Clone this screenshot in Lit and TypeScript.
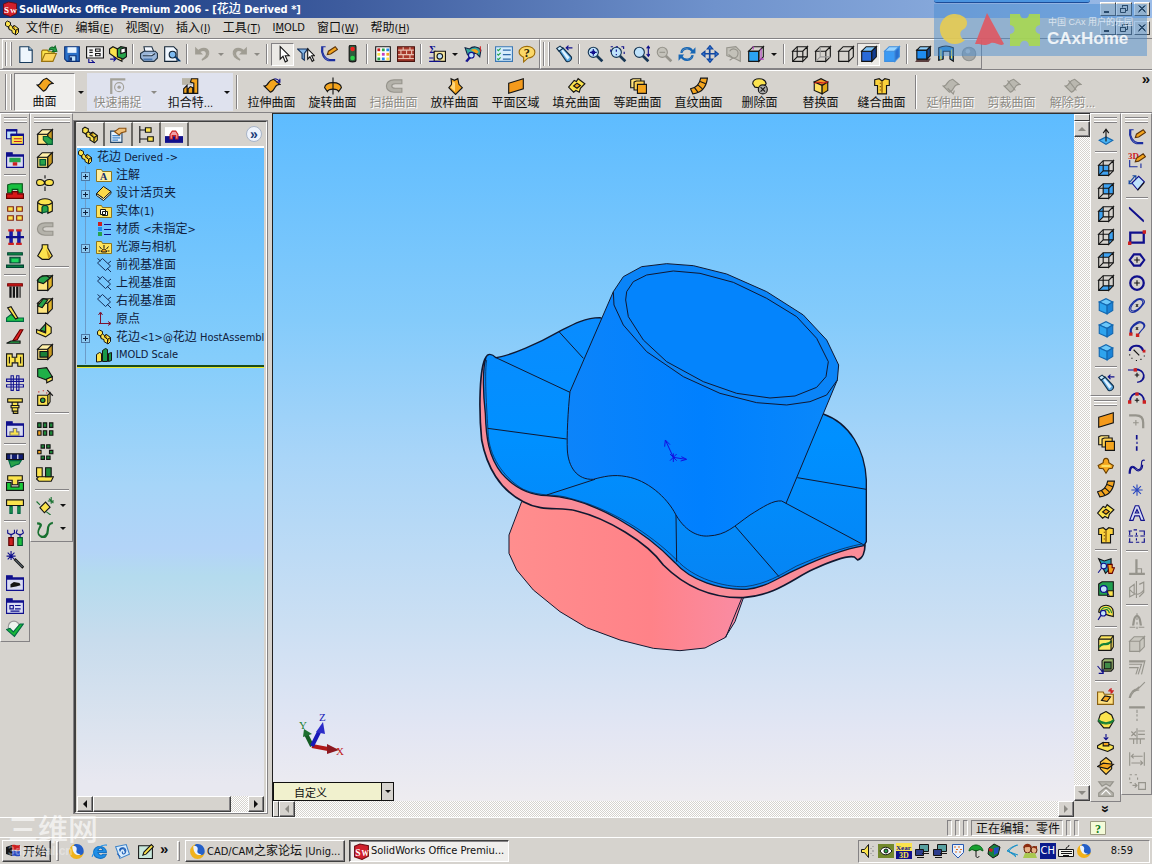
import { LitElement, html, svg, css, nothing } from "lit";
import { customElement, property } from "lit/decorators.js";
import { classMap } from "lit/directives/class-map.js";

type Shape = [string, string, string] | ["T", string, number, number, number, string];

const K = "#151515";
const N = "#10108c";
const Y = "#fbe34d";
const O = "#f4a51e";
const G = "#27a34a";
const B = "#1f8cf0";
const L = "#bfe2fb";
const D = "#96948c";
const R = "#cc2020";
const W = "#ffffff";
const X = "none";

/* wire box: front, top, side and hidden edges */
const FRONT = "M1.5 5.5h9v9h-9z";
const TOP = "M1.5 5.5l4-4h9l-4 4z";
const SIDE = "M10.5 5.5l4-4v9l-4 4z";
const HIDDEN = "M5.5 1.5v9h9M5.5 10.5l-4 4";
const wire = (face: string): Shape[] => [
  ["#3da2f2", X, face],
  [X, K, FRONT + TOP + SIDE],
  [X, K, HIDDEN],
];
const solid = (f: string, t: string, s: string, line = K): Shape[] => [
  [f, line, FRONT],
  [t, line, TOP],
  [s, line, SIDE],
];
const iso = (t: string, l: string, r: string, line = K): Shape[] => [
  [t, line, "M2 4.5L8 1.5l6 3-5 3z"],
  [l, line, "M2 4.5l7 3v7.5l-7-3z"],
  [r, line, "M14 4.5l-5 3v7.5l5-3z"],
];
const sheet = (c: string, line: string): Shape[] => [
  [c, line, "M1 8c2 0 3-1 4-3s2.500-2.500 4.500-3l5.500 4.500c-2 0-3.500 1-4.500 3s-2 3.500-4 4z"],
];
const lens = (c: string, line: string): Shape[] => [
  [X, line, "M9.500 9.500l5 5M10 9l5 5M9 10l5 5"],
  [c, line, "M11 6.500a4.500 4.500 0 1 1-9 0a4.500 4.500 0 1 1 9 0z"],
];
const part: Shape[] = [
  [Y, K, "M1.500 2.500l2-1.500 3 1.500v2.500l2 1.500 2-1 4 3v4l-2.500 2.500-4-2.500v-2l-3-1v-2l-3.500-2z"],
  ["#b88a10", K, "M6.500 5l-2 1.500v2M14.500 8.500l-3 1.800v4.200M10.500 5.500l-2.500 2 3.500 2.800"],
];
const windowBox: Shape[] = [
  ["#d9dcf2", N, "M.5 3.500h15v11h-15z"],
  [N, N, "M.5 1.500h5v2h10v1h-15z"],
];
const globe: Shape[] = [
  ["#f0b21c", X, "M8 1a7 7 0 1 0 7 7c-1 3-5 4-7 1s-1-6 0-8z"],
  ["#245fc8", X, "M6 1.500c5-2 10 3 8.500 8-1.500 3-5 2.500-6.500 0s-4-5-2-8z"],
  ["#e8f2ff", X, "M4 3c3-1 5 1 4 4s3 4 4 3c-2 3-8 1-8-7z"],
];
const sw: Shape[] = [
  ["#d0202c", "#6d0d14", "M1.500 3l5-2 8 1.500v10l-6 3-7-2.500z"],
  ["T", W, 2, 12, 9, "S"],
  ["T", W, 8, 12, 7, "W"],
];
const monitors: Shape[] = [
  ["#58a0a0", K, "M5.500 1.500h9v7h-9z"],
  ["#2c3c8c", K, "M1.500 6.500h8v6h-8z"],
  [X, K, "M8 10.500h7M3 14.500h7"],
];
const plane: Shape[] = [[X, "#16305c", "M1.500 6l5-4.500 8 7.500-5 4.500zM1.500 1.500l3 2.500M11 11l4 4M12 6.500l3-2.500"]];

const ICONS: Record<string, Shape[]> = {
  part, globe, sw, monitors, plane,
  new: [["#eef6fd", "#163a5c", "M2.500 1.500h8l3 3v11h-11z"], [L, "#163a5c", "M10.500 1.500v3h3"]],
  open: [[Y, "#9a7410", "M1.500 14.500v-9l1-1h4l1 1.500h5v2"], ["#fdd55c", "#9a7410", "M1.500 14.500l3-7h10l-3 7z"], [G, "#0f6a28", "M8 4.500c1-3 3-3 4.500-2l1-1.500 1.500 4.500-4 .5 1-1.500c-1-1-2-.5-4 0z"]],
  save: [["#2a70c8", "#0b2f74", "M1.500 1.500h13v13h-11l-2-2z"], ["#e8f4ff", X, "M4 2h8v5h-8z"], [L, "#0b2f74", "M5.500 9.500h6v5h-6z"], ["#0b2f74", X, "M6 11h2v3h-2z"]],
  drawing: [["#f4f4f4", K, "M.5 1.500h15v10h-15z"], [X, K, "M3 4.500h3M3 6.500h3M3 9.500h3M8.500 3.500h4v2h-4zM8.500 7.500h4v2h-4z"], [X, N, "M5 15.500h3M2.500 12.500v3h4M5 13.500l2 2-2 2"]],
  asm: [[Y, K, "M.5 3.500l3-2 4 2v5l4 1v5l-4-2-7-5z"], [G, K, "M7.500 3.500l3-2 5 1v8l-3 2-5-2z"], [W, K, "M10.500 3.500l4-1v4l-4 1z"], [X, N, "M1 12.500h5M4 10.500l2 2-2 2"]],
  print: [["#f4f8ff", "#234", "M4.500 6.500l-1-5h7l2 5z"], ["#9bb6d8", "#234", "M.5 7.500l3-2h10l2 2v4l-3 3h-9l-3-3z"], ["#dfeaf6", "#234", "M2.500 9.500h8l3-2"], ["#4a78b0", X, "M3 12h8v1.500h-8z"]],
  preview: [["#f0f7ff", "#123", "M1.500 1.500h8l3 3v10h-11z"], ["#7dbaf0", "#123", "M11.500 8.500a3 3 0 1 1-6 0a3 3 0 1 1 6 0z"], [X, "#0b3c70", "M10.500 10.500l4 4M11 10l4.500 4.500"]],
  undo: [[X, "#a09d93", "M3 6c3-4 9-4 10 0s-2 6-6 7.500M3.500 6.500c3-4 8-3 8.500 0s-2 5-5 6.500M3.500 7.500c3-4 7-3 7.500-.5s-1 4-4 6"], ["#a09d93", X, "M1 1.500v7h7z"]],
  redo: [[X, "#a09d93", "M13 6c-3-4-9-4-10 0s2 6 6 7.500M12.500 6.500c-3-4-8-3-8.500 0s2 5 5 6.500M12.500 7.500c-3-4-7-3-7.500-.5s1 4 4 6"], ["#a09d93", X, "M15 1.500v7h-7z"]],
  arrow: [[W, K, "M5.500 1.500v11l2.500-2.500 2 5 2-1-2-4.500h3.500z"]],
  filter: [["#86b8e8", "#14305c", "M.5 3.500h9l-3 4v6l-2-1.500v-4.500z"], [W, K, "M9.500 3.500v9l2-2 2 4 1.500-1-2-4h2.500z"]],
  sketch: [[X, "#1b2ea0", "M5 1.500h-4M1.500 2c-1 6 2 11 6 12h6M2.500 2c-1 6 2 10 6 11h5"], [O, "#5d3408", "M6.500 8.500l1-3 6-4 2 2.500-6 4z"]],
  light: [["#2c5c3c", K, "M5.500 1.500c0-2 6-2 6 0v12c0 2-6 2-6 0z"], ["#f02020", X, "M10.500 3.500a2 2 0 1 1-4 0a2 2 0 1 1 4 0z"], ["#28d048", X, "M10.500 11.500a2 2 0 1 1-4 0a2 2 0 1 1 4 0z"]],
  palette: [[W, K, "M1.500 1.500h13v13h-13z"], [R, X, "M3 3h2.500v2.500h-2.500z"], [G, X, "M7 3h2.500v2.500h-2.500zM3 11h2.500v2.500h-2.500z"], [B, X, "M11 3h2.500v2.500h-2.500zM7 11h2.500v2.500h-2.500z"], [Y, X, "M3 7h2.500v2.500h-2.500zM11 11h2.500v2.500h-2.500z"], ["#c040c0", X, "M7 7h2.500v2.500h-2.500z"], [O, X, "M11 7h2.500v2.500h-2.500z"]],
  brick: [["#a93a2c", "#4a1510", "M.5 1.500h15v13h-15z"], [X, "#e8c0b0", "M1 4.500h14M1 8.500h14M1 12h14M5.500 2v2M11.500 2v2M3.500 5v3M8.500 5v3M13 5v3M5.500 9v3M11.500 9v3"]],
  measure: [["T", N, 1, 7, 9, "Σ"], ["#f5e6a0", K, "M5.500 5.500h10v9h-10z"], [L, K, "M13 10a2.500 2.500 0 1 1-5 0a2.500 2.500 0 1 1 5 0z"], [X, N, "M1 11.500h4M1 14.500h10"]],
  check: [["#35a8a0", "#124", "M1 2.500l4 1c3-3 8-2 10 1l-1 6-4-4-4 5-3-3z"], [O, X, "M6 4.500c3-2 6-1 7 2l-2 1-3-2z"], [L, N, "M9 9a2.500 2.500 0 1 1-5 0a2.500 2.500 0 1 1 5 0z"], [X, N, "M4.500 11l-3 3.500M5.500 11.500l-3 3.500"], [X, R, "M14.500 1v5"]],
  list: [["#d6ecfc", "#3b78b4", "M.5 1.500h15v13h-15z"], [X, "#2f6aa8", "M7 4.500h7M7 8.500h7M7 12.500h7"], [X, G, "M2 4l1 1 2-2M2 8l1 1 2-2M2 12l1 1 2-2"]],
  help: [["#fbd868", "#9c6c08", "M15 6.500c0 4-4 5-6 5l-4 3.500v-4c-2-1-4-2-4-4.500 0-7 14-7 14 0z"], ["T", "#2a2408", 5, 11, 11, "?"]],
  torch: [["#5aa8e0", "#10304c", "M3.500 5l3.500-2.500 7 7.500c2 2-1 6-4 4.500z"], ["#c8ecff", "#10304c", "M1.500 3l3-2 2.500 2-3.500 2.500z"], ["#dff2ff", X, "M5.500 5l1.500-1 6 7-2 2z"], [X, N, "M9.500 2.500h6M12 .5l-2 2 2 2"]],
  zoomfit: [...lens(L, "#173654"), [X, N, "M6.500 3.500v6M3.500 6.500h6M5.500 5.500h2v2h-2z"]],
  zoomarea: [...lens(L, "#173654"), [X, N, "M6.500 4v2M6.500 8v1M1.500 1.500h2M6 1.500h2M11 1.500h2v2M1.500 4v2M13.500 6v2"]],
  zoomio: [...lens(L, "#173654"), [X, N, "M14.500 1.500v8M13 3l1.500-2L16 3M13 8l1.500 2L16 8"]],
  zoomsel: [...lens("#c4c2ba", D), [X, D, "M4 6.500h5"]],
  rotate: [[X, "#1766b4", "M2.500 7c1-6 9-6 11-1M13.500 9c-1 6-9 6-11 1M3.500 7c1-4 7-5 9-1M12.500 9c-1 4-7 5-9 1"], ["#1766b4", X, "M15.500 2v5.500h-5zM.5 14v-5.500h5z"]],
  pan: [[X, "#1247a0", "M8 2v12M2 8h12M7.500 3v10M3 7.500h10"], ["#2f78d8", "#1247a0", "M8 .5l2.500 3h-5zM8 15.500l2.500-3h-5zM.5 8l3-2.500v5zM15.500 8l-3-2.500v5z"]],
  rotgray: [["#c3c1b9", D, "M2.500 2.500l8-1 4 4v9l-4-2-8-3z"], [X, D, "M5 5.500a4 4 0 1 1 3 6M4 8.500l4 3-3 2"]],
  stdview: [["#2aa4f4", K, "M1.500 5.500h9v9h-9z"], [X, K, TOP + SIDE], [X, "#b040c0", "M5.500 4v-3M12.500 3v9M11 12.500h4"]],
  wire: [[X, K, FRONT + TOP + SIDE], [X, K, HIDDEN]],
  hidvis: [[X, K, FRONT + TOP + SIDE], [X, "#999", HIDDEN]],
  hidrem: [[X, K, FRONT + TOP + SIDE]],
  shadedge: solid("#2a6ad8", "#7fc4f8", "#123c90"),
  shaded: solid("#3b9af4", "#9bd4ff", "#2a70d0", "#3f8fe0"),
  shadow: [["#5c4040", X, "M1 15l2-3h12l-2 3z"], [B, K, "M2.500 4.500h9v8h-9z"], ["#8fd0ff", K, "M2.500 4.500l3-3h9l-3 3z"], ["#154a90", K, "M11.500 4.500l3-3v8l-3 3z"]],
  section: [["#2f90d8", K, "M1.500 2.500c4-2 9-2 13 0v12l-3-2v-7h-6v7l-4 1z"], [X, Y, "M3.500 4v9M13 4v8"]],
  sphere: [["#a5a7a6", "#909290", "M14 8a6 6 0 1 1-12 0a6 6 0 1 1 12 0z"], ["#c8caca", X, "M9 5.500a2 2 0 1 1-4 0a2 2 0 1 1 4 0z"]],
  surf: sheet(O, K),
  surfGray: [...sheet("#bab8b0", D), [X, D, "M5 10l5 5 1-3"]],
  trimGray: [...sheet("#bab8b0", D), [X, D, "M4 3l7 9"]],
  snap: [[X, "#a3a199", "M1.500 15v-13.500h13M2.500 15v-12.500h12M13 9a4 4 0 1 1-8 0a4 4 0 1 1 8 0z"], ["#a3a199", X, "M10.500 9a1.500 1.500 0 1 1-3 0a1.500 1.500 0 1 1 3 0z"]],
  snapfit: [["#b9b5a8", X, "M0 1h9v6h-9z"], [O, K, "M1.500 14.500v-4l3-3v7zM5.500 14.500v-4l2-2 2 1v5zM10.500 14.500v-9l-3-1 1-3h5.500v13z"]],
  extrude: [...sheet(O, K), [X, N, "M10 1.500c3 0 4 1 5 3M15 1.500v3h-3"]],
  revolve: [[O, K, "M.5 9.500c1-6 14-6 15 0l-2.500 3.500c-1-3-9-3-10 0z"], [X, K, "M8 .5v15"]],
  sweepGray: [["#b4b2aa", D, "M15 2.500h-7c-9 0-9 11 0 11h7v-3.500h-6c-4 0-4-4 0-4h6z"]],
  loft: [[O, K, "M4.500 1.500l3 1.500 3-1.500 1 5 3 3-6 6-6-6 2.500-3z"], ["#ffd77a", X, "M6 4l2 1v8l-4-4 1-1z"]],
  planar: [["#f39a1c", K, "M1.500 5.500l13-4v9l-13 4z"]],
  fill: [[Y, K, "M.5 9l5-6 2 1 1.500-2.500 6 4.500-4 4-1 3.500-3-1.500-2 1.500z"], [O, K, "M5 8l3-2.500 3 2-3 2.500z"]],
  offset: [["#ffe27a", K, "M1.500 2.500l2-1h7v8h-9z"], ["#ffd050", K, "M4.500 4.500l2-1h7v8h-9z"], [O, K, "M7.500 6.500h8v8h-8z"]],
  ruled: [[O, K, "M.5 10.500c5-1 8-4 9-9.500h6c-1 8-5 13-13 14z"], [X, K, "M4 9.500l3 4M7 7l4 3.500M9 4l5 2"]],
  delface: [[Y, K, "M1.500 6c0-6 11-6 12 0l-4 4-6-1z"], ["#aaa", K, "M14.500 11a4 4 0 1 1-8 0a4 4 0 1 1 8 0z"], [X, K, "M8.500 9l4 4M12.500 9l-4 4"]],
  replace: [...iso("#f59a28", "#ffe060", "#e0a818"), [X, R, "M2 6c3-4 8 2 12-2"]],
  knit: [["#fbd23c", K, "M1.500 2.500l4-1 2.500 2 2.500-2 4 1v5h-2.500v7.500h-8v-7.500h-2.500z"], [X, "#7a4a00", "M8 4v10M6 5.500h1M6 8.500h1M6 11.500h1"]],
  /* mould toolbar */
  wins: [[L, N, "M.5 1.500h9v8h-9z"], [Y, N, "M4.500 5.500h11v9h-11z"], [N, N, "M.5 1.500h9v1h-9zM4.500 5.500h11v1h-11z"], [X, R, "M7 9.500h7M7 12h7"]],
  winmold: [...windowBox, [G, X, "M3 6h10v4h-10z"], [R, X, "M6 10h4v3h-4z"]],
  core: [["#18c040", "#065018", "M1.500 9.500v-7l3-1h10v8h-4v-3h-5v3z"], ["#d81818", "#600", "M.5 10.500h5v-2h5v2h5v4h-15z"]],
  blocks: [[Y, "#802010", "M1.500 1.500h5v4h-5zM9.500 1.500h5v4h-5zM1.500 9.500h5v4h-5zM9.500 9.500h5v4h-5z"]],
  pins: [["#2020c0", N, "M3.500 2.500h2v11h-2zM10.500 2.500h2v11h-2zM.5 7.500h15v1h-15z"], [R, X, "M2 1h5v2h-5zM9 1h5v2h-5zM2 13h5v2h-5zM9 13h5v2h-5z"]],
  base: [["#109048", "#043", "M1.500 1.500h13v2h-13zM3.500 5.500h9v5h-9zM.5 12.500h15v2h-15z"], ["#20d860", X, "M5 7h6v3h-6z"]],
  ejector: [["#d81818", "#700", "M1.500 1.500h13v2h-13z"], [X, K, "M3.500 4v10M6.500 4v10M9.500 4v10M12.500 4v10M4.500 4v10M7.500 4v10M10.500 4v10"]],
  lifter: [["#20c848", "#064", "M.5 11.500l4-3 4 3h7v3h-15z"], [Y, K, "M1.500 2.500l3-1 6 10-2 1z"]],
  slide: [["#e02020", "#600", "M12.500 1.500h2.500l-5 9-4 1z"], [G, K, "M.5 13.500l4-2h8v2z"]],
  insert: [[Y, K, "M.5 2.500h5v3h4v-3h6v11h-5v-3h-5v3h-5z"], [X, K, "M3 5v6M13 5v6M8 6v4"]],
  cool: [[W, N, "M4.500 1.500h2v13h-2zM9.500 1.500h2v13h-2zM.5 4.500h15v2h-15zM.5 9.500h15v2h-15z"]],
  screw: [[Y, K, "M1.500 1.500h13v3h-13zM5.500 4.500h5v3h-5zM4.500 7.500h7v2h-7zM5.500 9.500h5v3h-5zM6.500 12.500h4v2h-4z"]],
  winlib: [...windowBox, [Y, "#777", "M3.500 10.500h3v-3h3v3h2v3h-8z"]],
  electrode: [["#101c70", K, "M.5 2.500h15v5h-15z"], [G, "#064", "M2.500 8.500h11l-2 3-3 1-4 2z"], [X, W, "M4.500 3v4M10.500 3v4"]],
  yin: [["#18c838", K, "M.5 7.500h4v4h7v-4h4v7h-15z"], [Y, K, "M1.500 1.500h13v4h-4v4h-5v-4h-4z"]],
  bench: [[Y, K, "M.5 2.500h15v5h-15z"], [G, "#064", "M3.500 8.500h2v6h-2zM10.500 8.500h2v6h-2z"]],
  tools: [[R, "#500", "M2.500 8.500h4v7h-4z"], ["#20c040", "#053", "M10.500 8.500h4v7h-4z"], [X, N, "M4.500 8v-3M1.500 1.500v3l3 1.500 3-1.500v-3M12.500 8v-3M10 1.500l-1 3 3.500 2 3-2-1-3"]],
  wand: [[X, N, "M4.500 0v8M.5 4.500h8M1.500 1.500l6 6M7.500 1.500l-6 6"], [L, K, "M7.500 8l1-1 7 7-1 1z"]],
  winpic: [...windowBox, [K, X, "M4 9l3-2 5 1 1 2-4 1-5 1z"]],
  wintab: [...windowBox, [X, N, "M3.500 7.500h3v3h-3zM8 7.500h5M8 10.500h5M4 12.500h8"]],
  ok: [["#eef4ee", "#999", "M12 6a5 5 0 1 1-10 0a5 5 0 1 1 10 0z"], ["#18b838", "#064", "M.5 8.500l3-1 3 3 6-7 3 0-8 11z"]],
  /* feature toolbar */
  boss: [...solid("#ffe680", "#fff0a8", "#c89a20"), [G, "#053", "M6.500 7.500h4l4 3v4h-4l-4-4z"]],
  cut: [...solid("#ffe680", "#fff0a8", "#c89a20"), [G, "#053", "M3.500 7.500h5v5h-5z"]],
  revboss: [[Y, K, "M.5 7.500c0-4 6-3 7 0 1-3 8-4 8 0s-7 3-8 1c-1 2-7 3-7-1z"], [X, K, "M8 1v3M8 6v3M8 11v4"]],
  revcut: [[Y, K, "M1.500 4.500c2-4 11-4 13 0v8l-4 2v-5c0-2-5-2-5 0v5l-4-2z"], [G, "#053", "M5.500 14v-5c1-2 4-2 5 0v4z"], [X, K, "M1.500 5c3 3 10 3 13 0"]],
  loftboss: [[Y, K, "M5.500 1.500h5v3l4 7-3 3h-6l-4-3 4-7z"], ["#c89a20", X, "M9 5l4 7-2 2z"]],
  fillet: [...solid("#ffe680", "#4fc35c", "#e0b428"), [G, K, "M1.500 7c0-4 3-5 8-5.500l3 2-6 5z"]],
  chamfer: [...solid("#ffe680", "#ffe680", "#e0b428"), [G, K, "M1.500 8l5-6.500 4 1-5 7z"]],
  rib: [[Y, K, "M.5 8.500l8 3v-9l5 4v5l-5 3.500-8-3.500z"], [G, K, "M3.500 9l5-5.500v7z"]],
  shell: [...solid("#ffe680", "#fff0a8", "#c89a20"), ["#188038", K, "M3.500 7.500h7v5h-7z"]],
  draft: [["#20b048", K, "M1.500 2.500l8-1 5 8-5 3-8-3z"], [Y, K, "M9.500 11.500l5-2v3l-5 2.500z"]],
  holewiz: [[Y, K, "M1.500 5.500h9v9h-9zM10.500 5.500l2-2v8l-2 3"], [G, K, "M8 10a2 2 0 1 1-4 0a2 2 0 1 1 4 0z"], [X, R, "M2 2.500h1M6 1.500h1M9 3.500h1"], [X, K, "M10 1l5 5"]],
  pattern: [["#1c8838", K, "M6.500 2.500h3v4h-3zM12 2.500h3v4h-3zM1.500 2.500h3v4h-3zM6.500 9.500h3v4h-3zM12 9.500h3v4h-3z"], [O, K, "M1.500 9.500h3v4h-3z"]],
  circpat: [["#1c8838", K, "M4.500 1.500h3v3h-3zM9.500 1.500h3v3h-3zM12 6.500h3v3h-3zM9.500 11.500h3v3h-3zM4.500 11.500h3v3h-3z"], [O, K, "M1.500 6.500h3v3h-3z"]],
  mirror: [[Y, K, "M.5 1.500h5v8h-5zM.5 11.500l2-2h13l-2 4h-11z"], ["#1c8838", K, "M8.500 1.500h5v8h-5z"]],
  refgeo: [[Y, K, "M3.500 9.500l5-5 4 4.500-5 5z"], [X, "#187030", "M.5 4l3 3M9 13l4 3M13.500 0v6M10.500 3.500h6M11.500 1.500l4 4"]],
  curve: [[X, "#187030", "M1 2.500c3 0 5 1 3 4s-3 6 0 7.500 6-1 6-5 1-6 5-7M1 3.500c3 0 3 1 2 3s-3 6 1 8.500 7-1 7-6 2-6 4-6M1 3c4 0 4 1 2.500 3.500s-3 6 .5 8 6.500-1 6.500-5.500 1.500-6 4.500-6.500"]],
  /* view toolbar */
  normalto: [["#4ab4f4", "#1468b0", "M2 11l6-3 6 3-6 3.500z"], [X, K, "M8 12v-11M5.500 4.500l2.500-3.500 2.500 3.500"]],
  vfront: wire(FRONT),
  vback: wire("M5.500 1.500h9v9h-9z"),
  vleft: wire("M1.500 5.500l4-4v9l-4 4z"),
  vright: wire(SIDE),
  vtop: wire(TOP),
  vbottom: wire("M1.500 14.500l4-4h9l-4 4z"),
  viso: iso("#6cc8fa", "#2ea4ee", "#1b84d8", "#1468b0"),
  /* surface column */
  revsurf: [[O, "#6a4000", "M5.500 5c0-5 5-5 5 0l4 2.500-1 2.500-3 .5-2.500 4-2.500-4-3.500-.5-1-2.500z"], ["#ffe060", X, "M4 7h8v2h-8z"]],
  thick: [["#289cb0", K, "M1.500 1.500l5 2 6-2v8l-5 5z"], [O, "#600", "M9.500 6.500h4v3h2l-2 5h-3z"], [L, N, "M8.500 8a2.500 2.500 0 1 1-5 0a2.500 2.500 0 1 1 5 0z"], [X, N, "M4 10l-3 4"]],
  inspect: [["#20a050", K, "M1.500 3.500l3-2h10v9l-3 3h-10z"], [Y, K, "M9.500 9.500h5v5h-5z"], [L, N, "M9 8a3 3 0 1 1-6 0a3 3 0 1 1 6 0z"], [X, N, "M8 10l3 4"]],
  zebra: [[Y, K, "M1.500 8c0-8 13-8 13 0v4l-4-1z"], [X, "#178038", "M3 8c2-6 9-5 10 1M5 8c2-3 5-3 6 1"], [L, N, "M8 9a2.500 2.500 0 1 1-5 0a2.500 2.500 0 1 1 5 0z"], [X, N, "M3.500 11l-2.500 4"]],
  split: [["#ffe860", K, "M1.500 4.500l2-3h11v10l-2 3h-11z"], [X, "#178038", "M2 11c4-6 5 1 11-5M2 12c4-6 5 1 11-5"], [X, K, "M1.500 4.500h11v10M12.500 4.500l2-3"]],
  move: [["#9cb870", K, "M4.500 3.500l2-2h8v9l-2 2h-8z"], ["#408c48", K, "M6.500 4.500h6v6h-6z"], [X, N, "M.5 8l5 6M5.500 10.500v4h-4"]],
  libfeat: [["#ffe080", "#8a6010", "M.5 14.500v-11h5l1 2h8v9z"], [O, K, "M4 11l3-4 5 1-3 4z"], [X, R, "M12.500 0v5M10 2.500h5M11 1l3 3"]],
  parting: [[Y, K, "M8 .5l5 3 2 5-4 6.500h-5l-5-6 2-6z"], [X, "#178038", "M1 8.500c4 4 10 4 14 0M1 7.500c4 4 10 4 14 0"]],
  toolsplit: [[Y, K, "M.5 10.500l5-3 9 3v2.500l-5 2.500-9-3z"], [O, K, "M5.500 7.500h5v3h-5z"], [X, N, "M8 0v5M6 3l2 2 2-2"]],
  shutoff: [["#ffc840", K, "M8 .5l5 4v6l-5 5-5-5v-6z"], [O, K, "M.5 8.500l5-3 9 1-5 4z"]],
  corecav: [["#b5b3ab", D, "M1.500 1.500h13l-3 4-3.500-2-3.500 2zM1.500 14.500h13v-3l-6.500-5-6.500 5z"], [X, W, "M4 13l4-4 4 4"]],
  /* sketch column */
  sk3d: [["T", R, 0, 7, 8, "3D"], [X, "#1b2ea0", "M1.500 8v6h7M11.500 15v-4"], [O, "#5d3408", "M6.500 9.500l1-3 6-4 2 2.500-6 4z"]],
  dim: [[L, N, "M3.500 8l6-6 5 5-6 7z"], [X, "#1a4aa0", "M.5 8.500l6-7M1 5.500v3h3M4 1.500h3v3"], [X, K, "M8.500 14.500l6-7"]],
  line: [[X, N, "M1 2l13 12M1 3l13 12"]],
  rect: [[X, N, "M1.500 3.500h13v10h-13zM2.500 4.500h11v8h-11z"], [R, X, "M0 12h3v3h-3zM13 2h3v3h-3z"]],
  poly: [[X, N, "M5 2.500h6l4 5.500-4 5.500h-6l-4-5.500zM5.500 3.500h5l3.500 4.500-3.500 4.500h-5l-3.500-4.500z"], [X, K, "M8 5.500v5M5.500 8h5"]],
  circle: [[X, N, "M14.500 8a6.500 6.500 0 1 1-13 0a6.500 6.500 0 1 1 13 0zM13.500 8a5.500 5.500 0 1 1-11 0a5.500 5.500 0 1 1 11 0z"], [X, K, "M8 5.500v5M5.500 8h5"]],
  ellipse: [[X, "#1b2ea0", "M2 13c-3-3 2-9 6-11s8 1 6 4-8 10-12 7zM3 12c-2-3 2-7 5-9s6 0 5 3-7 8-10 6z"], [X, K, "M7 6.500l2 2M9 6.500l-2 2"]],
  pellipse: [[X, "#1b2ea0", "M3 13c-3-4 1-9 5-11s9 2 6 5-4 5-5 6M3.500 12c-2-4 1-7 5-9s7 2 5 4"], [X, K, "M7 6.500l2 2M9 6.500l-2 2"], [R, X, "M1 11h3v3h-3zM7 12h3v3h-3z"]],
  carc: [[X, N, "M1 7c1-6 11-7 13 0M2 7c1-5 9-6 11 0"], [X, K, "M5 6l5 5M1.500 10v1M3 13.500h1M7 15.500h1M11 14.500h1M14 11.500h1"], [R, X, "M13 6h2.500v2.500h-2.500z"]],
  tarc: [[X, N, "M0 3.500h6c10-1 10 10 2 11M6 2.500c10 0 11 11 3 12"], [R, X, "M5 2h3v3h-3z"], [X, K, "M8 6v4M6 8h4"]],
  arc3: [[X, N, "M2 11c0-9 12-9 12 0M1.500 11c0-10 13-10 13 0"], [R, X, "M0 10h3v3h-3zM13 10h3v3h-3zM6.500 3h3v3h-3z"], [X, K, "M8 8v4M6 10h4"]],
  skfillet: [[X, D, "M1 2.500h6c5 0 7 3 7 7v5M1 3.500h6c4 0 6 2 6 6v5M7 7v5M4.500 9.500h5"]],
  center: [[X, N, "M8 0v4M8 6v2M8 10v4M7.500 0v4M7.500 10v4"]],
  spline: [[X, N, "M1 14c0-7 3-8 6-5s5 0 5-4 2-3 3-3M2 14c0-6 2-7 4.500-4s6.500 1 6.500-4"]],
  point: [[X, "#2a48c0", "M8 3v10M3 8h10M4.500 4.500l7 7M11.500 4.500l-7 7"]],
  text: [["#d5d9f2", N, "M6.500 1.500h3l5 13h-3l-1.500-4h-4l-1.500 4h-3zM8 5l-1.500 3h3z"]],
  skgrid: [[X, N, "M.5 3.500h3M5 2.500h3M10 3.500h5M.5 8h4M6 8h3M11 8h4M.5 13.500h4M7 13.500h3M12 13.500h3M1.500 4v3M1.500 10v3M14.500 4v3M14.500 10v3M7.500 5v2M7.500 10v2"]],
  perp: [[X, D, "M8 1v13M7 1v13M1 14.500h14M1 13.500h14M8 9.500h4v4"]],
  symm: [[X, D, "M7.500 0v15M1.500 6l4-3v9l-4 2zM10 3l4-2v9l-4 4M2 8c4 5 8 5 12 0"]],
  bell: [[X, D, "M8 1v2M8 5v2M8 9v2M8 13v2M4 12c1-3 0-8 4-9 4 1 3 6 4 9M1.500 13.500h5M9.500 13.500h5M5 12c1-3 0-7 3-8 3 1 2 5 3 8"]],
  boxGray: [["#c9c7bf", D, FRONT + TOP + SIDE]],
  offGray: [[X, D, "M1 2.500h14l-3 12M1 5.500h11l-3 9M1 8.500h8l-2 6M1 3.500h13"]],
  trim: [[X, D, "M1 15c2-7 6-8 8-8M9 7l6-6M5 9l5-4M4 10l6-4M2 15c2-6 5-7 8-7"]],
  extend: [[X, D, "M1 2.500h14M1 3.500h14M8 5v3M8 9v2M8 13v2"]],
  mirrorGray: [[X, D, "M3 4l4 4M3 8l4-4M1 10.500h14M9 3.500h6M9 6.500h6M5 10v5M11 10v5M8 1v14"]],
  linGray: [[X, D, "M1.500 2v12M14.500 2v12M3 5.500h10M3 11.500h10M5 3.500l-2 2 2 2M11 9.500l2 2-2 2"]],
  convGray: [[X, D, "M1.500 1.500h2M6 1.500h2M1.500 4v2M8.500 4v2M1.500 8.500h2M9.500 8.500h6v6h-6zM4 11h4M6 9l2 2-2 2"]],
  /* tree */
  note: [["#fff0a0", "#8a7420", "M.5 14.500v-12h5l1 2h9v10z"], ["T", "#162c6c", 4, 13, 10, "A"]],
  binder: [["#fbd84a", K, "M.5 8.500l7-7 7.500 5-7.500 7z"], ["#fff6c8", K, "M.5 8.500l7 5 7.500-7v2l-7.500 7-7-5z"]],
  bodies: [["#ffe45c", "#8a7420", "M.5 14.500v-12h5l1 2h9v10z"], [W, K, "M4.500 6.500h5v5h-5zM6.500 8.500h5v4h-5z"]],
  material: [[R, X, "M2 1h4v4h-4z"], [B, X, "M2 6h4v4h-4z"], [G, X, "M2 11h4v4h-4z"], [X, N, "M8 3.500h7M8 8.500h7M8 13.500h7"]],
  lights: [["#ffe45c", "#8a7420", "M.5 14.500v-12h5l1 2h9v10z"], [O, K, "M5.500 13c0-4 5-4 5 0z"], [X, K, "M8 6v3M3.500 7.500l2 2.500M12.500 7.500l-2 2.500M2.500 12h2M11.500 12h2"]],
  origin: [[X, "#7c1430", "M4.500 13v-11M2.500 4l2-3 2 3M3 12.500h11M12 10.500l3 2-3 2"]],
  scale: [[Y, K, "M.5 7.500l3-2 2 1v8l-5 .5z"], ["#189848", K, "M6.500 3.500l3-2 2 1v12h-5zM12.500 6.500l3-1v8l-3 1z"]],
  props: [["#e4f2ff", "#246", "M1.500 4.500h10v10h-10z"], [X, "#48c", "M3 8.500h7M3 10.500h7M3 12.500h5"], ["#f0c078", "#8a5010", "M5 5l4-3h6v3l-4 1-2 2z"]],
  config: [[Y, K, "M7.500 1.500h5v4h-5zM9.500 9.500h5v4h-5z"], [X, K, "M2.500 0v15M2.500 3.500h5M2.500 11.500h7"]],
  mold: [["#fff", X, "M0 1h16v8h-16z"], [N, X, "M0 9h16v6h-16z"], ["#f0a0a8", R, "M4.500 11.500v-4l2-3h3l2 3v4h-2v-3h-3v3z"]],
  helpBox: [["#f4fbd8", "#9a9a80", "M.5 1.500h15v13h-15z"], ["T", "#0c7c20", 5, 13, 12, "?"]],
  /* task bar */
  flag: [[K, X, "M0 4l6-2v11l-6-2z"], [R, X, "M6 2c3-1 4 1 8 0v5c-4 1-5-1-8 0z"], ["#2848c0", X, "M6 8c3-1 4 1 8 0v5c-4 1-5-1-8 0z"]],
  ie: [["#2090e8", "#1470c0", "M14.500 9h-8c1 3 4 3 5 1.500h3c-2 6-12 5-12-2s12-7 12 .5zM6.500 7h4.500c0-3-4-3-4.500 0z"], [X, "#2090e8", "M1 13c3-8 9-12 14-11"]],
  mail: [["#d8ecfc", "#3a80c8", "M1.500 3.500l10-2 3 9-9 4z"], [X, "#1f60b8", "M5 7c1-4 7-3 6 1s-4 2-3 0M3 10l3 3M5.500 8c1-4 5-3 4.500 0"]],
  note2: [["#c8e8dc", K, "M1.500 2.500h13v12h-13z"], [Y, K, "M5.500 11.500l1-3 7-7 2 2-7 7z"]],
  sound: [[Y, K, "M1.500 6.500h3l4-5v13l-4-5h-3z"], [X, "#888", "M11 5v1M13 3v1M11 10v1M13 12v1M12 8h2"]],
  eye: [["#72882c", X, "M0 1h16v14h-16z"], [W, K, "M2 8c3-5 8-5 12 0-4 5-9 5-12 0z"], [G, K, "M10 8a2 2 0 1 1-4 0a2 2 0 1 1 4 0z"]],
  xear: [[Y, X, "M0 0h16v8h-16z"], [N, X, "M0 8h16v8h-16z"], ["T", N, 0, 7, 7, "Xear"], ["T", Y, 3, 15, 8, "3D"]],
  shield: [["#e8f0fc", "#2858b0", "M2.500 1.500h11v8l-5.500 5.500-5.500-5.500z"], [X, "#e07020", "M4 4h2M8 4h2M6 6.500h2M10 6.500h2M5 9h2M9 9h2"]],
  umbrella: [["#18a030", "#0a6018", "M1 8c1-8 13-8 14 0l-3-1.500-4 1.500-4-1.500z"], [X, K, "M8 7v6c0 2 3 2 3 0"]],
  cube3: [["#18803c", K, "M8 1l6 3-2 8-5 3-5-4 1-6z"], ["#2050c0", X, "M8 5l5-1-1 6-4 2z"], [R, X, "M3 5l4 1-1 3-3-1z"]],
  bird: [[X, "#1890c8", "M14 2c-5 1-8 3-11 6l11 4M13 2c-4 2-7 4-8 6M3 7c3 3 5 3 9 7M4 7.500c3 3 5 3 8 5"]],
  people: [["#e8b088", "#5c2008", "M9 6a3.500 4 0 1 1-7 0a3.500 4 0 1 1 7 0zM15 7a3 3.500 0 1 1-6 0a3 3.500 0 1 1 6 0z"], ["#8c2c10", X, "M1 5c1-6 8-5 9-1l5-1v3c-4-2-10-3-14-1z"], ["#a8c850", X, "M1 15l2-5h10l2 5z"]],
  keys: [["#f2f2ec", K, "M.5 6.500h15v7h-15z"], [X, K, "M3 8.500h11M3 10.500h11M5 12.500h6M8 6c0-3 3-1 3-4"]],
};

const CJK = /([\u3000-\u9fff\uff00-\uffef]+)/;
const mix = (s: string) =>
  s.split(CJK).map((p) => (CJK.test(p) ? html`<span class="han">${p}</span>` : p));

const base = css`
  * { box-sizing: border-box; }
  button { font: inherit; color: inherit; background: none; border: 0; padding: 0; margin: 0; display: flex; align-items: center; justify-content: center; flex: none; }
  .han { font-family: "Noto Sans CJK SC", sans-serif; font-size: 12px; font-weight: 400; }
`;

@customElement("ui-icon")
class UiIcon extends LitElement {
  static styles = css`
    :host { display: block; flex: none; width: 16px; height: 16px; }
    svg { display: block; width: 100%; height: 100%; overflow: hidden; }
    text { font-family: "Liberation Serif", serif; font-weight: 700; }
  `;
  @property() name = "";
  render() {
    return html`<svg viewBox="0 0 16 16" aria-hidden="true">
      ${(ICONS[this.name] ?? []).map((s) =>
        s[0] === "T"
          ? svg`<text x=${s[2]} y=${s[3] as number} font-size=${s[4] as number} fill=${s[1]}>${s[5]}</text>`
          : svg`<path fill=${s[0]} stroke=${s[1]} d=${s[2]}></path>`
      )}
    </svg>`;
  }
}

/* A toolbar: names of icons, "|" for a separator, "name+" adds a drop arrow, "name*" is pressed. */
@customElement("tool-bar")
class ToolBar extends LitElement {
  static styles = [base, css`
    :host { display: flex; flex: none; align-items: center; padding: 0 1px 0 2px; border: 1px solid; border-color: #fff #848284 #848284 #fff; }
    :host([vertical]) { flex-direction: column; padding: 3px 0 1px; }
    .grip { flex: none; width: 7px; height: 24px; margin: 0 2px 0 0; border: solid; border-width: 0 1px; border-color: #848284; box-shadow: inset 1px 0 #fff, inset -1px 0 #fff; }
    .tool { width: 23px; height: 23px; }
    .tool ui-icon { width: 18px; height: 18px; }
    .pressed { border: 1px solid; border-color: #848284 #fff #fff #848284; background: #eceae6; }
    .drop { width: 13px; height: 22px; }
    .drop::after { content: ""; border: 3px solid transparent; border-top-color: #111; border-bottom: 0; }
    .drop.off::after { border-top-color: #8c8a84; }
    .sep { flex: none; width: 8px; height: 20px; display: flex; justify-content: center; }
    .sep::after { content: ""; border-left: 1px solid #848284; border-right: 1px solid #fff; }
    .pair { display: flex; align-items: center; }
    :host([vertical]) .grip { width: 23px; height: 6px; margin: 0 0 2px; border-width: 1px 0; box-shadow: inset 0 1px #fff, inset 0 -1px #fff; }
    :host([wide]) .grip { width: 36px; }
    :host([vertical]) .sep { width: 22px; height: 8px; flex-direction: column; }
    :host([wide]) .sep { width: 34px; }
    :host([vertical]) .sep::after { border: 0; border-top: 1px solid #848284; border-bottom: 1px solid #fff; }
    :host([wide]) .pair { align-self: flex-start; padding-left: 2px; }
  `];
  @property({ type: Array }) items: string[] = [];
  render() {
    return html`<span class="grip"></span>${this.items.map((raw) => {
      if (raw === "|") return html`<span class="sep"></span>`;
      const drop = raw.endsWith("+");
      const name = raw.replace(/[+*]$/, "");
      return html`<span class="pair">
        <button class=${classMap({ tool: true, pressed: raw.endsWith("*") })} aria-label=${name}><ui-icon name=${name}></ui-icon></button>
        ${drop ? html`<button class=${classMap({ drop: true, off: name === "undo" || name === "redo" })} aria-label="${name} menu"></button>` : nothing}
      </span>`;
    })}`;
  }
}

const bar = (s: string) => s.split(" ");
const FILE = bar("new open save drawing asm | print preview | undo+ redo+ | arrow* filter sketch light | palette brick | measure+ check | list help");
const VIEW = bar("torch | zoomfit zoomarea zoomio zoomsel rotate pan rotgray stdview+ | wire hidvis hidrem shadedge* shaded | shadow section sphere");
const MOLD = bar("wins winmold | core blocks pins base | ejector lifter slide insert cool screw winlib | electrode yin bench | tools wand winpic wintab ok");
const FEATURE = bar("boss cut revboss revcut sweepGray loftboss | fillet chamfer rib shell draft holewiz | pattern circpat mirror | refgeo+ curve+");
const STDVIEW = bar("normalto | vfront vback vleft vright vtop vbottom viso viso viso | torch");
const SURFACE = bar("planar offset revsurf ruled fill knit | thick inspect zebra | split move | libfeat parting toolsplit shutoff corecav");
const SKETCH = bar("sketch sk3d dim | line rect poly circle ellipse pellipse carc tarc arc3 skfillet center spline point text skgrid | perp symm | bell boxGray offGray trim extend mirrorGray linGray convGray");

const MENUS: [string, string][] = [["文件", "F"], ["编辑", "E"], ["视图", "V"], ["插入", "I"], ["工具", "T"], ["", ""], ["窗口", "W"], ["帮助", "H"]];
const COMMANDS: [string, string][] = [
  ["extrude", "拉伸曲面"], ["revolve", "旋转曲面"], ["sweepGray", "扫描曲面"], ["loft", "放样曲面"], ["planar", "平面区域"], ["fill", "填充曲面"],
  ["offset", "等距曲面"], ["ruled", "直纹曲面"], ["delface", "删除面"], ["replace", "替换面"], ["knit", "缝合曲面"],
];
const OFF_COMMANDS: [string, string][] = [["surfGray", "延伸曲面"], ["trimGray", "剪裁曲面"], ["trimGray", "解除剪..."]];
const TREE: [string, string, boolean][] = [
  ["note", "注解", true], ["binder", "设计活页夹", true], ["bodies", "实体(1)", true], ["material", "材质 <未指定>", false], ["lights", "光源与相机", true],
  ["plane", "前视基准面", false], ["plane", "上视基准面", false], ["plane", "右视基准面", false], ["origin", "原点", false],
  ["part", "花边<1>@花边 HostAssembly", true], ["scale", "IMOLD Scale", false],
];
const TRAY = bar("sound eye xear monitors monitors shield umbrella cube3 bird people");

@customElement("app-root")
class AppRoot extends LitElement {
  static styles = [base, css`
    :host { display: flex; flex-direction: column; height: 100vh; overflow: hidden; position: relative; background: #d6d3ce; color: #101010; font: 11px/14px "DejaVu Sans Condensed", "Noto Sans CJK SC", sans-serif; white-space: nowrap; }
    .title { flex: none; height: 18px; display: flex; align-items: center; gap: 1px; padding: 0 2px; color: #fff; font-weight: 700; background: linear-gradient(90deg, #10347c, #3e5c9e 30%, #6f92cc 62%, #9bbce8); }
    .title .han { font-weight: 500; }
    .grow { flex: 1; min-width: 0; }
    .win { display: flex; }
    .win button { width: 16px; height: 14px; background: #d6d3ce; border: 1px solid; border-color: #fff #404040 #404040 #fff; }
    .win button:last-child { margin-left: 2px; }
    .win svg { width: 10px; height: 10px; fill: none; stroke: #111; }
    .menu { flex: none; height: 21px; display: flex; align-items: center; padding: 0 2px 0 4px; border-bottom: 1px solid #848284; }
    .menu nav { display: flex; }
    .menu nav button { padding: 0 6px; display: block; }
    .bars { flex: none; display: flex; height: 31px; padding-left: 2px; border-bottom: 1px solid #848284; }
    .manager { flex: none; height: 43px; display: flex; align-items: center; padding: 2px 2px 1px 5px; border-top: 1px solid #fff; border-bottom: 1px solid #848284; }
    .manager .grip { width: 7px; height: 36px; margin-right: 2px; border: solid #848284; border-width: 0 1px; box-shadow: inset 1px 0 #fff, inset -1px 0 #fff; }
    .cmd { flex: 0 0 61px; height: 38px; flex-direction: column; justify-content: flex-end; line-height: 14px; }
    .cmd ui-icon { width: 18px; height: 18px; }
    .off { color: #8c8a84; text-shadow: 1px 1px #fff; }
    .tint { display: flex; background: #dfe2ee; }
    .down { background: #efeeec; border: 1px solid; border-color: #848284 #fff #fff #848284; }
    .arrow { width: 12px; height: 38px; }
    .arrow::after { content: ""; border: 3px solid transparent; border-top-color: #111; border-bottom: 0; }
    .arrow.dim::after { border-top-color: #8c8a84; }
    .rule { width: 2px; height: 34px; margin: 0 3px; border-left: 1px solid #848284; border-right: 1px solid #fff; }
    .more { font: 700 15px/12px "Liberation Sans", sans-serif; align-self: flex-start; }
    .main { flex: 1; min-height: 0; display: flex; }
    .dock { flex: none; display: flex; flex-direction: column; }
    .dock.a { width: 30px; } .dock.b { width: 43px; } .dock.c { width: 31px; } .dock.d { width: 31px; }
    .chev { height: 14px; align-self: center; font: 700 14px/12px "Liberation Sans", sans-serif; }
    .turn { transform: rotate(90deg); }

    .panel { flex: none; width: 195px; display: flex; flex-direction: column; margin: 7px 0 3px; padding: 0 2px 0 1px; border: 2px solid; border-color: #404040 #fff #fff #404040; border-width: 2px 2px 2px 3px; outline: 1px solid #848284; outline-offset: -1px; }
    .tabs { display: flex; align-items: center; height: 26px; flex: none; border-bottom: 2px solid #fff; }
    .tabs button { width: 28px; height: 24px; border-right: 2px solid #6c6a66; border-top: 1px solid #fff; }
    .tabs ui-icon { width: 18px; height: 18px; }
    .tabs .round { width: 16px; height: 16px; margin: 0 2px 0 auto; border: 1px solid #a8b4c8; border-radius: 8px; background: #eef3fc; font: 700 14px/12px "Liberation Sans", sans-serif; color: #1c3c78; }
    .tree { flex: 1; min-height: 0; overflow: hidden; margin: 0; padding: 0; list-style: none; background: linear-gradient(#5fbcff, #84cdfb 32%, #a6d5f8 52%, #b3d4f8 62%, #b4dbee 66%, #c8dced 76%, #e8e8f0 98%); color: #10203c; }
    .node { height: 18px; display: flex; align-items: center; gap: 4px; overflow: hidden; }
    .guide { flex: none; width: 15px; height: 18px; display: flex; align-items: center; justify-content: flex-end; padding: 2px 2px 0 0; background: linear-gradient(90deg, transparent 8px, #6c9cc8 8px, #6c9cc8 9px, transparent 9px); }
    .plus { width: 9px; height: 9px; border: 1px solid #4c78a4; background: linear-gradient(#10203c, #10203c) center / 5px 1px no-repeat, linear-gradient(#10203c, #10203c) center / 1px 5px no-repeat, #90ccf4; }
    .end { height: 3px; margin-top: 1px; background: #1c4c18; border-bottom: 1px solid #e8e830; }
    .hbar { flex: none; display: flex; height: 16px; background: repeating-conic-gradient(#fff 0 25%, #d6d3ce 0 50%) 0 0 / 2px 2px; }
    .vbar { flex: none; width: 16px; display: flex; flex-direction: column; background: repeating-conic-gradient(#fff 0 25%, #d6d3ce 0 50%) 0 0 / 2px 2px; }
    .sb { width: 16px; height: 16px; background: #d6d3ce; border: 1px solid; border-color: #fff #404040 #404040 #fff; box-shadow: inset -1px -1px #848284; }
    .sb::after { content: ""; border: 4px solid transparent; border-right-color: #111; border-left: 0; }
    .sb.r::after { transform: rotate(180deg); } .sb.u::after { transform: rotate(90deg); } .sb.d::after { transform: rotate(270deg); }
    .sb.pale::after { border-right-color: #8c8a84; }
    .corner { flex: none; width: 16px; background: #d6d3ce; }
    .thumb { flex: 0 0 74%; background: #d6d3ce; border: 1px solid; border-color: #fff #404040 #404040 #fff; box-shadow: inset -1px -1px #848284; }

    .view { flex: 1; min-width: 0; display: flex; flex-direction: column; margin: 0 0 0 4px; border-left: 1px solid #202020; border-top: 1px solid #303030; }
    .row { flex: 1; min-height: 0; display: flex; }
    .canvas { flex: 1; min-width: 0; position: relative; overflow: hidden; background: linear-gradient(#5ebcff, #84cbfb 30%, #a9d5f8 50%, #cbdff3 74%, #e3e6f3 90%, #eeecf0); }
    .model { position: absolute; left: 0; top: 0; }
    .axes { position: absolute; left: 20px; bottom: 43px; font: 11px "Liberation Serif", serif; }
    .combo { position: absolute; left: 0; bottom: 0; display: flex; width: 121px; height: 19px; border: 1px solid #101010; background: #f1f1ce; }
    .combo select { flex: 1; appearance: none; border: 0; background: none; padding: 0 0 0 20px; font: 11px/16px "Noto Sans CJK SC", sans-serif; color: #101010; }
    .combo span { width: 12px; background: #d6d3ce; border-left: 1px solid #101010; display: flex; align-items: center; justify-content: center; }
    .combo span::after { content: ""; border: 3px solid transparent; border-top-color: #111; border-bottom: 0; }
    .split { width: 6px; height: 16px; background: #d6d3ce; border: 1px solid; border-color: #fff #404040 #404040 #fff; }
    .split.h { width: 16px; height: 7px; }

    .status { flex: none; height: 21px; display: flex; align-items: center; justify-content: flex-end; gap: 3px; border-top: 1px solid #fff; border-bottom: 1px solid #fff; padding-right: 46px; }
    .cell { min-width: 5px; height: 16px; padding: 0 1px; border: 1px solid; border-color: #848284 #fff #fff #848284; line-height: 14px; }
    .cell.main-cell { width: 92px; padding-left: 4px; }
    .status ui-icon { margin-left: 8px; }
    .task { flex: none; height: 26px; display: flex; align-items: center; gap: 4px; padding: 0 2px; }
    .task .btn { height: 22px; border: 1px solid; border-color: #fff #404040 #404040 #fff; box-shadow: inset -1px -1px #848284; justify-content: flex-start; padding: 0 3px; gap: 1px; overflow: hidden; }
    .task .btn.wide { flex: 0 1 160px; }
    .task .btn.wide ui-icon { width: 17px; height: 17px; }
    .task .btn.active { background: #efeeec; border-color: #404040 #fff #fff #404040; box-shadow: inset 1px 1px #848284; }
    .task .grip { width: 3px; height: 20px; border: 1px solid; border-color: #fff #848284 #848284 #fff; margin: 0 1px; }
    .quick { display: flex; gap: 6px; align-items: center; width: 104px; margin-left: 4px; }
    .quick ui-icon { width: 17px; height: 17px; }
    .tray { display: flex; align-items: center; gap: 2px; height: 23px; padding: 0 16px 0 1px; border: 1px solid; border-color: #848284 #fff #fff #848284; }
    .lang { width: 16px; height: 16px; background: #0a1a8c; color: #fff; text-align: center; line-height: 16px; }
    time { margin-left: 17px; }

    .brand { position: absolute; right: 5px; top: 4px; width: 213px; height: 52px; background: rgba(72, 140, 210, .48); pointer-events: none; }
    .brand svg { display: block; }
    .brand text { font-family: "Liberation Sans", "Noto Sans CJK SC", sans-serif; fill: #fff; }
    .tip { position: absolute; right: 62px; top: 0; width: 156px; height: 3px; border-radius: 0 0 6px 6px; background: #4a94e0; border-bottom: 1px solid #1c4c98; }
    .mark { position: absolute; left: 8px; bottom: 6px; color: rgba(255, 255, 255, .65); font: 500 30px/30px "Noto Sans CJK SC", sans-serif; pointer-events: none; display: flex; flex-direction: column; gap: 2px; }
    .mark small { font: 700 12px/14px "Liberation Sans", sans-serif; color: rgba(255, 255, 255, .35); }
  `];

  private winButtons(tag: string) {
    return html`<span class="win">
      <button aria-label="${tag} minimize"><svg viewBox="0 0 10 10"><path d="M1 8.500h5M1 7.500h5"></path></svg></button>
      <button aria-label="${tag} restore"><svg viewBox="0 0 10 10"><path d="M3.500 3.500v-2h5v5h-2M1.500 4.500h5v4h-5zM3 1.500h6M1 4.500h6"></path></svg></button>
      <button aria-label="${tag} close"><svg viewBox="0 0 10 10"><path d="M1.500 1.500l7 7M8.500 1.500l-7 7M2.500 1.500l6 6M7.500 1.500l-6 6"></path></svg></button>
    </span>`;
  }

  private cmd([icon, label]: [string, string], cls = "") {
    return html`<button class="cmd ${cls}"><ui-icon name=${icon}></ui-icon><span>${mix(label)}</span></button>`;
  }

  private model() {
    return html`<svg class="model" width="620" height="560" viewBox="0 0 620 560" role="img" aria-label="花边">
      <defs>
        <linearGradient id="pink"><stop offset="0" stop-color="#ff8e8e"></stop><stop offset=".6" stop-color="#ff8288"></stop><stop offset="1" stop-color="#f98ca4"></stop></linearGradient>
        <linearGradient id="cup"><stop offset="0" stop-color="#0c84fa"></stop><stop offset=".5" stop-color="#0080ff"></stop><stop offset="1" stop-color="#0a88fa"></stop></linearGradient>
        <linearGradient id="brim" x2="0" y2="1"><stop offset="0" stop-color="#0a8cff"></stop><stop offset=".45" stop-color="#0090ff"></stop><stop offset="1" stop-color="#0584f4"></stop></linearGradient>
      </defs>
      <g transform="translate(187 136) scale(.33333)" stroke="#101830" stroke-width="3" fill="none" stroke-linejoin="round">
        <path fill="url(#pink)" d="M185 755L147 855V910L170 960 220 1020 300 1085 380 1133 480 1170 580 1195 660 1202 735 1194 795 1163 825 1115 855 1030 640 850 400 720z"></path>
        <path d="M845 1045L797 1163"></path>
        <path fill="#f98c98" stroke-width="5" d="M78 322C58 350 56 480 65 570 80 650 120 720 190 755 250 788 300 768 350 783 440 805 560 875 610 945 680 1015 760 1045 850 1043 950 1035 1000 985 1060 958 1110 935 1160 915 1183 921L1193 930C1208 925 1215 905 1215 885L640 600z"></path>
        <path fill="url(#brim)" stroke-width="4" d="M420 203C370 203 330 228 297 245 240 278 150 318 108 323 95 310 82 310 78 322 66 360 70 440 76 490 78 560 85 620 125 670 160 710 205 735 260 737 400 742 560 850 645 938 690 990 780 1022 860 1018 920 1012 950 985 1010 958 1080 925 1140 900 1212 887L1219 875V690C1215 600 1170 520 1090 492z"></path>
        <path stroke-width="2" d="M80 330C72 380 82 500 85 560 92 630 140 690 190 718 240 742 290 730 330 745 450 775 570 850 650 930 700 985 790 1012 855 1010 920 1002 960 975 1010 948 1080 918 1140 895 1205 882"></path>
        <path d="M297 245L370 325M108 323L330 427M83 535L320 567M260 735L405 688M648 795L650 935M825 828L957 980M978 760L1212 885M1012 683L1219 718"></path>
        <path fill="url(#cup)" d="M460 125L330 425C324 480 320 560 322 600 325 650 350 690 400 688 430 680 460 672 500 680 560 690 620 740 648 795 680 850 720 860 745 858 800 855 820 830 870 795 910 770 940 750 965 753L978 760 1132 390 900 160z"></path>
        <path fill="#0a84f8" d="M460 125L490 80 545 50 620 41 700 47 800 72 920 125 1030 195 1100 270 1136 345 1132 390 1100 435 1050 455 980 465 890 458 780 430 670 380 560 305 490 225 462 165z"></path>
        <path fill="#0484fc" d="M497 150L500 125 520 95 560 75 640 63 720 70 820 97 920 145 1010 200 1070 265 1105 335 1098 380 1070 412 1005 438 930 444 830 430 730 395 620 335 550 270 505 200z"></path>
        <path stroke="#1410e0" d="M640 622L617 572M614 590L616 570 630 584M640 622L678 628M664 620L680 628 662 633M630 612L650 632M650 612L630 632M640 610V636"></path>
      </g>
    </svg>
    <svg class="axes" width="56" height="46" viewBox="0 0 56 46" aria-hidden="true">
      <path d="M19 34L13 22" stroke="#145c24" stroke-width="4"></path><path d="M10 25l1-8 8 5z" fill="#1c7030"></path>
      <path d="M19 34l16 3" stroke="#b01818" stroke-width="4"></path><path d="M34 32l12 6-12 4z" fill="#8c1820"></path>
      <path d="M19 34l7-14" stroke="#1818b8" stroke-width="4"></path><path d="M23 20l7-10 2 12z" fill="#2c2cc8"></path>
      <text x="6" y="17" fill="#188030">Y</text><text x="26" y="9" fill="#1818b8">Z</text><text x="43" y="43" fill="#c01818">X</text>
    </svg>`;
  }

  render() {
    return html`
      <header class="title"><ui-icon name="sw"></ui-icon><span class="grow">${mix("SolidWorks Office Premium 2006 - [花边 Derived *]")}</span>${this.winButtons("window")}</header>
      <div class="menu"><ui-icon name="part"></ui-icon>
        <nav class="grow">${MENUS.map(([t, k]) => t ? html`<button>${mix(t)}(<u>${k}</u>)</button>` : html`<button>I<u>M</u>OLD</button>`)}</nav>
        ${this.winButtons("document")}</div>
      <div class="bars"><tool-bar .items=${FILE}></tool-bar><tool-bar .items=${VIEW}></tool-bar></div>
      <div class="manager"><span class="grip"></span>
        ${this.cmd(["surf", "曲面"], "down")}<button class="arrow" aria-label="曲面"></button>
        <div class="tint">${this.cmd(["snap", "快速捕捉"], "off")}<button class="arrow dim" aria-label="快速捕捉"></button>${this.cmd(["snapfit", "扣合特..."])}<button class="arrow" aria-label="扣合特"></button></div>
        <span class="rule"></span>${COMMANDS.map((c) => this.cmd(c, c[0] === "sweepGray" ? "off" : ""))}
        <span class="rule"></span>${OFF_COMMANDS.map((c) => this.cmd(c, "off"))}
        <span class="grow"></span><button class="more" aria-label="more">»</button></div>
      <div class="main">
        <div class="dock a"><tool-bar vertical .items=${MOLD}></tool-bar></div>
        <div class="dock b"><tool-bar vertical wide .items=${FEATURE}></tool-bar></div>
        <section class="panel">
          <div class="tabs">${["part", "props", "config", "mold"].map((n) => html`<button aria-label=${n}><ui-icon name=${n}></ui-icon></button>`)}<button class="round" aria-label="expand">»</button></div>
          <ul class="tree">
            <li class="node"><ui-icon name="part"></ui-icon><span>${mix("花边 Derived ->")}</span></li>
            ${TREE.map(([i, t, e]) => html`<li class="node"><span class="guide">${e ? html`<span class="plus"></span>` : nothing}</span><ui-icon name=${i}></ui-icon><span>${mix(t)}</span></li>`)}
            <li class="end"></li>
          </ul>
          <div class="hbar"><button class="sb" aria-label="left"></button><span class="thumb"></span><span class="grow"></span><button class="sb r" aria-label="right"></button></div>
        </section>
        <section class="view">
          <div class="row">
            <div class="canvas">${this.model()}
              <div class="combo"><select aria-label="自定义"><option>自定义</option></select><span></span></div></div>
            <div class="vbar"><span class="split h"></span><button class="sb u pale" aria-label="up"></button><span class="grow"></span><button class="sb d pale" aria-label="down"></button></div>
          </div>
          <div class="hbar"><span class="split"></span><button class="sb pale" aria-label="left"></button><span class="grow"></span><button class="sb r pale" aria-label="right"></button><span class="corner"></span></div>
        </section>
        <div class="dock c"><tool-bar vertical .items=${STDVIEW}></tool-bar><tool-bar vertical .items=${SURFACE}></tool-bar><button class="chev" aria-label="more"><span class="turn">»</span></button></div>
        <div class="dock d"><tool-bar vertical .items=${SKETCH}></tool-bar></div>
      </div>
      <footer class="status"><span class="cell"></span><span class="cell"></span><span class="cell"></span><span class="cell main-cell">${mix("正在编辑：零件")}</span><span class="cell"></span><span class="cell"></span><ui-icon name="helpBox"></ui-icon></footer>
      <div class="task">
        <button class="btn"><ui-icon name="flag"></ui-icon>${mix("开始")}</button><span class="grip"></span>
        <div class="quick">${["globe", "ie", "mail", "note2"].map((n) => html`<button aria-label=${n}><ui-icon name=${n}></ui-icon></button>`)}<button class="more" aria-label="more">»</button></div>
        <span class="grip"></span>
        <button class="btn wide"><ui-icon name="globe"></ui-icon><span>${mix("CAD/CAM之家论坛 |Unig...")}</span></button>
        <button class="btn wide active"><ui-icon name="sw"></ui-icon><span>SolidWorks Office Premiu...</span></button>
        <span class="grow"></span>
        <div class="tray">${TRAY.map((n) => html`<ui-icon name=${n}></ui-icon>`)}<span class="lang">CH</span><ui-icon name="keys"></ui-icon><ui-icon name="globe"></ui-icon><time>8:59</time></div>
      </div>
      <div class="tip"></div>
      <div class="brand"><svg width="213" height="52" viewBox="0 0 213 52" aria-hidden="true">
        <path fill="#e8cc50" opacity=".9" d="M30 13A15 15 0 1 0 31 36c-5-1-7-9-1-11 4-3 4-9 0-12z"></path>
        <path fill="#e05860" opacity=".9" d="M53 9L70 40c-4 3-8-2-13-1-5 3-8 2-12 1H41z"></path>
        <path fill="#a8d850" opacity=".9" d="M76 10h10c0 6 9 6 9 0h11v11c-6 0-6 9 0 9v12H95c0-7-9-7-9 0H76V30c6 0 6-9 0-9z"></path>
        <text x="114" y="21" font-size="9" opacity=".65">中国 CAx 用户的乐园</text>
        <text x="113" y="40" font-size="17" font-weight="700" opacity=".85">CAxHome</text></svg></div>
      <div class="mark"><span>三维网</span><small>3dportal.cn</small></div>`;
  }
}
